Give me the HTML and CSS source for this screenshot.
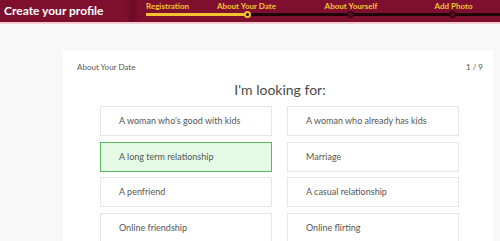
FILE: index.html
```html
<!DOCTYPE html>
<html lang="en">
<head>
    <meta charset="UTF-8">
    <meta name="viewport" content="width=device-width, initial-scale=1.0">
    <title>Create your profile</title>
    <link rel="stylesheet" href="styles.css">
</head>
<body>
    <header class="topbar">
        <div class="brand">Create your profile</div>
        <div class="steps">
            <div class="step step-first done">
                <span class="step-label">Registration</span>
                <div class="track"></div>
            </div>
            <div class="step current">
                <span class="step-label">About Your Date</span>
                <div class="track"><i class="dot"></i></div>
            </div>
            <div class="step">
                <span class="step-label">About Yourself</span>
                <div class="track"><i class="dot"></i></div>
            </div>
            <div class="step">
                <span class="step-label">Add Photo</span>
                <div class="track"><i class="dot"></i></div>
            </div>
        </div>
    </header>

    <main class="card">
        <div class="card-head">
            <span>About Your Date</span>
            <span>1 / 9</span>
        </div>
        <h2 class="question">I'm looking for:</h2>
        <div class="options">
            <div class="option">A woman who's good with kids</div>
            <div class="option">A woman who already has kids</div>
            <div class="option selected">A long term relationship</div>
            <div class="option">Marriage</div>
            <div class="option">A penfriend</div>
            <div class="option">A casual relationship</div>
            <div class="option">Online friendship</div>
            <div class="option">Online flirting</div>
        </div>
    </main>
</body>
</html>
```

FILE: styles.css
```css
body {
    margin: 0;
    background: #f8f8f8;
    font-family: "Lato", "Open Sans", sans-serif;
    color: #555;
}
.topbar {
    display: flex;
    height: 22px;
    background: #7e0f2f;
    border-bottom: 2px solid #f4cbd4;
}
.brand {
    width: 140px;
    flex-shrink: 0;
    padding-left: 4px;
    box-sizing: border-box;
    font-weight: bold;
    font-size: 12px;
    line-height: 22px;
    color: #fff;
    background: linear-gradient(to right, #7e0f2f 125px, #6c0b27 133px, #7e0f2f 140px);
}
.steps {
    display: flex;
    flex: 1;
}
.step {
    width: 103px;
    flex-shrink: 0;
    display: flex;
    flex-direction: column;
    align-items: center;
}
.step:last-child {
    width: auto;
    flex: 1;
}
.step-first {
    width: 55px;
    align-items: stretch;
    padding-left: 6px;
    box-sizing: border-box;
}
.step-label {
    font-weight: bold;
    font-size: 8px;
    line-height: 10px;
    margin-top: 1px;
    color: #f4c430;
    white-space: nowrap;
}
.step:nth-child(3) .step-label {
    margin-left: 3px;
}
.step:last-child .step-label {
    margin-left: 6px;
}
.track {
    position: relative;
    align-self: stretch;
    height: 3px;
    margin-top: 2px;
    background: #1e0309;
}
.done .track {
    background: #f4c430;
}
.current .track {
    background: linear-gradient(to right, #f4c430 50%, #1e0309 50%);
}
.dot {
    position: absolute;
    left: 50%;
    top: -2px;
    width: 5px;
    height: 5px;
    margin-left: -3px;
    border-radius: 50%;
    background: #5a0a20;
    border: 1px solid #1e0309;
}
.step:last-child .dot {
    left: 51px;
}
.current .dot {
    background: #2a0a10;
    border: 2px solid #f4c430;
    width: 3px;
    height: 3px;
}
.card {
    margin: 26px 7px 0 63px;
    background: #fff;
    padding: 12px 10px 0 14px;
    height: 179px;
    overflow: hidden;
}
.card-head {
    display: flex;
    justify-content: space-between;
    font-size: 8px;
    color: #555;
}
.question {
    margin: 8px 0 0;
    text-align: center;
    font-weight: normal;
    font-size: 14px;
    color: #4a4a4a;
    line-height: 20px;
}
.options {
    display: grid;
    grid-template-columns: 172px 172px;
    column-gap: 15px;
    row-gap: 5.5px;
    margin: 6px 0 0 23px;
}
.option {
    height: 30px;
    box-sizing: border-box;
    border: 1px solid #e6e6e6;
    padding-left: 18px;
    font-size: 9px;
    line-height: 28px;
    color: #555;
}
.option.selected {
    background: #e5fbe5;
    border-color: #5cb85c;
}
```
